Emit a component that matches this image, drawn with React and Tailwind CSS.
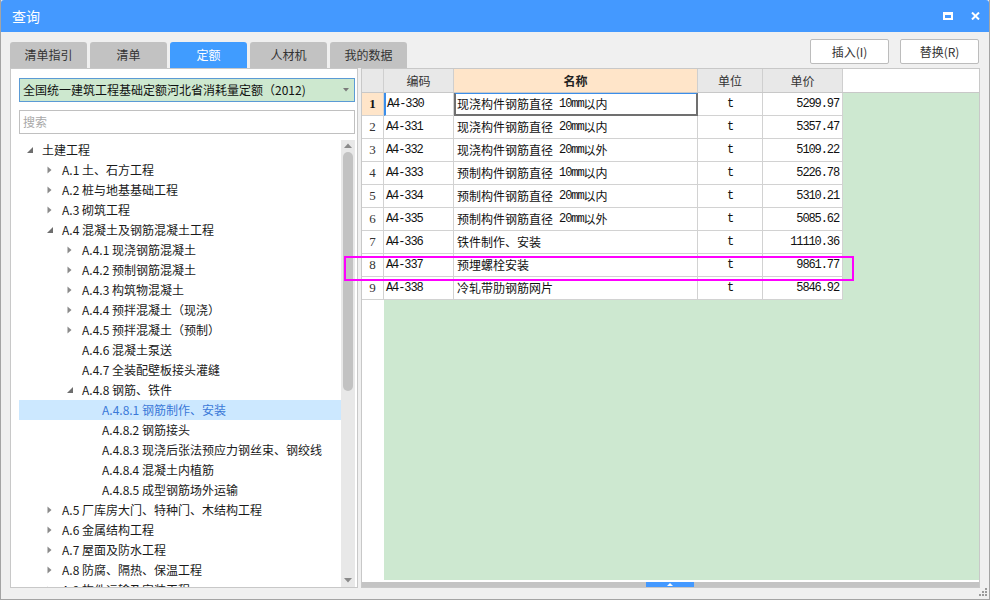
import React from 'react';

const tree = [
  [0, '土建工程', 'open'],
  [1, 'A.1 土、石方工程', 'closed'],
  [1, 'A.2 桩与地基基础工程', 'closed'],
  [1, 'A.3 砌筑工程', 'closed'],
  [1, 'A.4 混凝土及钢筋混凝土工程', 'open'],
  [2, 'A.4.1 现浇钢筋混凝土', 'closed'],
  [2, 'A.4.2 预制钢筋混凝土', 'closed'],
  [2, 'A.4.3 构筑物混凝土', 'closed'],
  [2, 'A.4.4 预拌混凝土（现浇）', 'closed'],
  [2, 'A.4.5 预拌混凝土（预制）', 'closed'],
  [2, 'A.4.6 混凝土泵送', ''],
  [2, 'A.4.7 全装配壁板接头灌缝', ''],
  [2, 'A.4.8 钢筋、铁件', 'open'],
  [3, 'A.4.8.1 钢筋制作、安装', '', true],
  [3, 'A.4.8.2 钢筋接头', ''],
  [3, 'A.4.8.3 现浇后张法预应力钢丝束、钢绞线', ''],
  [3, 'A.4.8.4 混凝土内植筋', ''],
  [3, 'A.4.8.5 成型钢筋场外运输', ''],
  [1, 'A.5 厂库房大门、特种门、木结构工程', 'closed'],
  [1, 'A.6 金属结构工程', 'closed'],
  [1, 'A.7 屋面及防水工程', 'closed'],
  [1, 'A.8 防腐、隔热、保温工程', 'closed'],
  [1, 'A.9 构件运输及安装工程', 'closed'],
];

const indent = ['pl-[8px]', 'pl-[28px]', 'pl-[48px]', 'pl-[68px]'];

const rows = [
  ['A4-330', '现浇构件钢筋直径 10mm以内', 't', '5299.97'],
  ['A4-331', '现浇构件钢筋直径 20mm以内', 't', '5357.47'],
  ['A4-332', '现浇构件钢筋直径 20mm以外', 't', '5109.22'],
  ['A4-333', '预制构件钢筋直径 10mm以内', 't', '5226.78'],
  ['A4-334', '预制构件钢筋直径 20mm以内', 't', '5310.21'],
  ['A4-335', '预制构件钢筋直径 20mm以外', 't', '5085.62'],
  ['A4-336', '铁件制作、安装', 't', '11110.36'],
  ['A4-337', '预埋螺栓安装', 't', '9861.77'],
  ['A4-338', '冷轧带肋钢筋网片', 't', '5846.92'],
];

const tabs = ['清单指引', '清单', '定额', '人材机', '我的数据'];

function Toggle({ kind }) {
  if (kind === 'open')
    return (
      <svg width="6" height="6" viewBox="0 0 6 6">
        <path d="M6 0V6H0Z" fill="#6e6e6e" />
      </svg>
    );
  if (kind === 'closed')
    return (
      <svg width="5" height="8" viewBox="0 0 5 8">
        <path d="M0.5 0.5L4.5 4L0.5 7.5Z" fill="#8a8a8a" />
      </svg>
    );
  return null;
}

// ascii runs get the narrow mono face, like the SimSun grid
function Mixed({ text }) {
  return text.split(/([\x20-\x7e]+)/).map((part, i) =>
    /^[\x20-\x7e]+$/.test(part) ? (
      <span key={i} className="font-['Liberation_Mono',monospace] text-[12px] tracking-[-1.1px] whitespace-pre">{part}</span>
    ) : (
      <span key={i}>{part}</span>
    )
  );
}

export default function App() {
  return (
    <div className="relative w-[990px] h-[600px] flex flex-col bg-[#f0f0f0] border-x border-b border-[#a4a4a4] font-['Noto_Sans_CJK_SC',sans-serif] text-[#222] overflow-hidden">
      {/* title bar */}
      <div className="h-[32px] shrink-0 bg-[#4499ff] flex items-center justify-between pl-[11px] pr-[9px] rounded-t-[3px]">
        <span className="text-white text-[14px] leading-none">查询</span>
        <div className="flex items-center gap-[18px]">
          <div className="w-[10px] h-[8px] border-2 border-t-[3px] border-white" />
          <svg width="9" height="8" viewBox="0 0 9 8">
            <path d="M1 0.5L8 7.5M8 0.5L1 7.5" stroke="white" strokeWidth="2" />
          </svg>
        </div>
      </div>

      <div className="flex-1 flex flex-col px-[9px]">
        {/* tabs + buttons */}
        <div className="h-[36px] shrink-0 flex justify-between">
          <div className="flex gap-[3px] self-end">
            {tabs.map(t => (
              <div
                key={t}
                className={
                  t === '定额'
                    ? 'w-[77px] h-[26px] rounded-t-[3px] bg-[#409cff] text-white text-[12px] flex items-center justify-center'
                    : 'w-[77px] h-[26px] rounded-t-[3px] bg-[#c2c2c2] text-[#333] text-[12px] flex items-center justify-center'
                }
              >
                {t}
              </div>
            ))}
          </div>
          <div className="flex gap-[11px] mt-[7px] mr-[1px]">
            {['插入(I)', '替换(R)'].map(b => (
              <div key={b} className="w-[79px] h-[25px] bg-white border border-[#bcbcbc] rounded-[2px] text-[12px] text-[#333] flex items-center justify-center">
                {b}
              </div>
            ))}
          </div>
        </div>

        {/* main */}
        <div className="h-[520px] shrink-0 flex gap-[3px]">
          {/* left panel */}
          <div className="w-[348px] shrink-0 bg-white border border-[#c8c8c8] flex flex-col">
            <div className="mt-[9px] ml-[8px] w-[336px] h-[24px] border border-[#5b9bd5] bg-[#cde8cf] flex items-center justify-between pl-[3px] pr-[5px]">
              <span className="text-[12px] text-[#111]">全国统一建筑工程基础定额河北省消耗量定额（2012)</span>
              <svg width="6" height="4" viewBox="0 0 6 4">
                <path d="M0 0H6L3 3.5Z" fill="#7a7a7a" />
              </svg>
            </div>
            <div className="mt-[8px] ml-[8px] w-[336px] h-[24px] border border-[#c0c0c0] flex items-center pl-[3px] text-[12px] text-[#a8a8a8]">
              搜索
            </div>
            <div className="mt-[6px] flex-1 flex min-h-0">
              <div className="flex-1 overflow-hidden pl-[8px]">
                {tree.map(([lvl, text, kind, sel]) => (
                  <div
                    key={text}
                    className={`h-[20px] flex items-center ${indent[lvl]} ${sel ? 'bg-[#cce8ff] text-[#3a78d8]' : 'text-[#1a1a1a]'}`}
                  >
                    <div className="w-[15px] shrink-0 flex items-center">
                      <Toggle kind={kind} />
                    </div>
                    <span className="text-[12px] leading-none whitespace-nowrap">{text}</span>
                  </div>
                ))}
              </div>
              <div className="w-[14px] mr-[2px] bg-[#e8e8e8] flex flex-col items-center">
                <svg width="8" height="5" viewBox="0 0 8 5" className="mt-[3px]">
                  <path d="M0 5L4 0.5L8 5Z" fill="#8a8a8a" />
                </svg>
                <div className="mt-[4px] w-[10px] h-[239px] rounded-[5px] bg-[#c2c2c2]" />
                <div className="flex-1" />
                <svg width="8" height="5" viewBox="0 0 8 5" className="mb-[4px]">
                  <path d="M0 0L4 4.5L8 0Z" fill="#8a8a8a" />
                </svg>
              </div>
            </div>
          </div>

          {/* grid */}
          <div className="flex-1 bg-white border border-[#c8c8c8] flex flex-col text-[12px]">
            <div className="h-[24px] shrink-0 flex border-b border-[#c8c8c8] text-[#333]">
              <div className="w-[22px] bg-[#e8e8e8] border-r border-[#cfcfcf]" />
              <div className="w-[70px] bg-[#e8e8e8] border-r border-[#cfcfcf] flex items-center justify-center">编码</div>
              <div className="w-[244px] bg-[#ffe5c9] border-r border-[#cfcfcf] flex items-center justify-center font-bold text-[#222]">名称</div>
              <div className="w-[65px] bg-[#e8e8e8] border-r border-[#cfcfcf] flex items-center justify-center">单位</div>
              <div className="w-[80px] bg-[#e8e8e8] border-r border-[#cfcfcf] flex items-center justify-center">单价</div>
              <div className="flex-1" />
            </div>
            {rows.map(([code, name, unit, price], i) => (
              <div key={code} className="h-[23px] shrink-0 flex">
                <div
                  className={
                    i === 0
                      ? "w-[22px] bg-[#ffe5c9] border-r border-b border-[#d2d2d2] flex items-center justify-center font-['Liberation_Serif',serif] font-bold text-[13px] text-[#111]"
                      : "w-[22px] bg-white border-r border-b border-[#d2d2d2] flex items-center justify-center font-['Liberation_Serif',serif] text-[13px] text-[#333]"
                  }
                >
                  {i + 1}
                </div>
                <div
                  className={
                    i === 0
                      ? 'w-[70px] bg-white border-r border-b border-[#d2d2d2] border-l-2 border-l-[#3b8eea] flex items-center pl-[1px] text-[#111]'
                      : 'w-[70px] bg-white border-r border-b border-[#d2d2d2] flex items-center pl-[2px] text-[#111]'
                  }
                >
                  <Mixed text={code} />
                </div>
                <div
                  className={
                    i === 0
                      ? 'w-[244px] bg-white border-2 border-t border-[#707070] border-t-[#3b8eea] flex items-center pl-[1px] text-[#111]'
                      : 'w-[244px] bg-white border-r border-b border-[#d2d2d2] flex items-center pl-[3px] text-[#111]'
                  }
                >
                  <Mixed text={name} />
                </div>
                <div className="w-[65px] bg-white border-r border-b border-[#d2d2d2] flex items-center justify-center text-[#111]">
                  <Mixed text={unit} />
                </div>
                <div className="w-[80px] bg-white border-r border-b border-[#d2d2d2] flex items-center justify-end pr-[3px] text-[#111]">
                  <Mixed text={price} />
                </div>
                <div className="flex-1 bg-[#cde8d0]" />
              </div>
            ))}
            <div className="flex-1 flex">
              <div className="w-[22px] bg-white" />
              <div className="flex-1 bg-[#cde8d0]" />
            </div>
            <div className="h-[2px] shrink-0 bg-white" />
            <div className="h-[5px] shrink-0 bg-[#c4c4c4] flex">
              <div className="w-[284px]" />
              <div className="w-[48px] bg-[#4499ff] flex items-center justify-center">
                <svg width="6" height="3" viewBox="0 0 6 3">
                  <path d="M0 3L3 0L6 3Z" fill="white" />
                </svg>
              </div>
            </div>
          </div>
        </div>
        <div className="flex-1" />
      </div>

      {/* resize grip */}
      <svg width="8" height="8" viewBox="0 0 8 8" className="absolute right-[2px] bottom-[3px]">
        <rect x="6" y="0" width="2" height="2" fill="#9a9a9a" />
        <rect x="3" y="3" width="2" height="2" fill="#9a9a9a" />
        <rect x="6" y="3" width="2" height="2" fill="#9a9a9a" />
        <rect x="0" y="6" width="2" height="2" fill="#9a9a9a" />
        <rect x="3" y="6" width="2" height="2" fill="#9a9a9a" />
        <rect x="6" y="6" width="2" height="2" fill="#9a9a9a" />
      </svg>

      {/* annotation box drawn over the grid */}
      <div className="absolute left-[343px] top-[256px] w-[510px] h-[25px] border-2 border-[#f0f]" />
    </div>
  );
}
